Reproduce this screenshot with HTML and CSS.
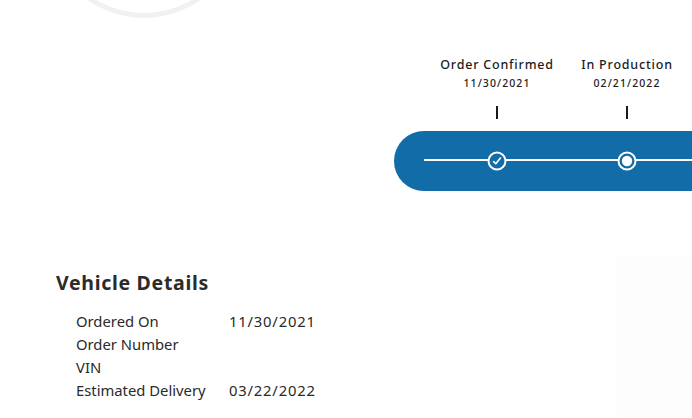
FILE: index.html
```html
<!DOCTYPE html>
<html>
<head>
<meta charset="utf-8">
<link rel="stylesheet" href="styles.css">
</head>
<body>
<div class="page">
  <div class="ring"></div>
  <section class="timeline">
    <div class="steps">
      <div class="step">
        <div class="step-title">Order Confirmed</div>
        <div class="step-date">11/30/2021</div>
        <div class="tick"></div>
      </div>
      <div class="step">
        <div class="step-title">In Production</div>
        <div class="step-date">02/21/2022</div>
        <div class="tick"></div>
      </div>
    </div>
    <div class="bar">
      <div class="node">
        <svg width="20" height="20" viewBox="0 0 20 20"><circle cx="10" cy="10" r="8.5" fill="#116ca8" stroke="#fff" stroke-width="2"/><path d="M6.6 10.6 L8.8 12.8 L13.4 7" fill="none" stroke="#fff" stroke-width="1.6" stroke-linecap="round" stroke-linejoin="round"/></svg>
      </div>
      <div class="node">
        <svg width="20" height="20" viewBox="0 0 20 20"><circle cx="10" cy="10" r="8.5" fill="#116ca8" stroke="#fff" stroke-width="2"/><circle cx="10" cy="10" r="5.2" fill="#fff"/></svg>
      </div>
    </div>
  </section>
  <section class="details">
    <h2 class="details-title">Vehicle Details</h2>
    <div class="rows">
      <div class="label">Ordered On</div><div class="value">11/30/2021</div>
      <div class="label">Order Number</div><div class="value"></div>
      <div class="label">VIN</div><div class="value"></div>
      <div class="label">Estimated Delivery</div><div class="value">03/22/2022</div>
    </div>
  </section>
  <div class="panel"></div>
</div>
</body>
</html>
```

FILE: styles.css
```css
html, body {
  margin: 0;
  padding: 0;
  background: #fff;
  overflow: hidden;
}
body {
  font-family: "Noto Sans", "Liberation Sans", sans-serif;
  color: #222;
}
.page {
  position: relative;
  width: 692px;
  height: 418px;
  overflow: hidden;
}
.ring {
  position: absolute;
  left: 46px;
  top: -178px;
  width: 186px;
  height: 186px;
  border: 5px solid #f1f1f1;
  border-radius: 50%;
}
.timeline {
  padding-top: 56px;
  padding-left: 394px;
}
.steps {
  display: flex;
  padding-left: 38px;
}
.step {
  width: 130px;
  display: flex;
  flex-direction: column;
  align-items: center;
}
.step-title {
  font-size: 12.5px;
  font-weight: 500;
  letter-spacing: 0.8px;
  line-height: 18px;
  color: #1c1c1c;
  white-space: nowrap;
}
.step-date {
  font-size: 10.5px;
  font-weight: 500;
  letter-spacing: 1.1px;
  line-height: 14px;
  margin-top: 2px;
  color: #1c1c1c;
}
.tick {
  width: 2px;
  height: 13px;
  background: #1a1a1a;
  margin-top: 16px;
}
.bar {
  position: relative;
  margin-top: 12px;
  height: 60px;
  width: 340px;
  background: #116ca8;
  border-radius: 30px 0 0 30px;
  display: flex;
  align-items: center;
  padding-left: 38px;
  box-sizing: border-box;
}
.bar::before {
  content: "";
  position: absolute;
  left: 30px;
  right: 0;
  top: 28px;
  height: 2px;
  background: #fff;
}
.node {
  position: relative;
  width: 130px;
  display: flex;
  justify-content: center;
}
.node svg {
  display: block;
}
.details {
  padding-left: 56px;
  margin-top: 80px;
}
.details-title {
  margin: 0;
  font-size: 19.5px;
  font-weight: 700;
  letter-spacing: 0.7px;
  color: #2b2b2b;
  line-height: 24px;
}
.rows {
  display: grid;
  grid-template-columns: 153px auto;
  grid-auto-rows: 23px;
  margin-top: 15px;
  padding-left: 20px;
  font-size: 14.8px;
  color: #2a2a2a;
  line-height: 23px;
}
.value {
  letter-spacing: 0.8px;
}
.panel {
  position: absolute;
  left: 617px;
  top: 256px;
  width: 80px;
  height: 170px;
  background: #fdfdfd;
}
```
